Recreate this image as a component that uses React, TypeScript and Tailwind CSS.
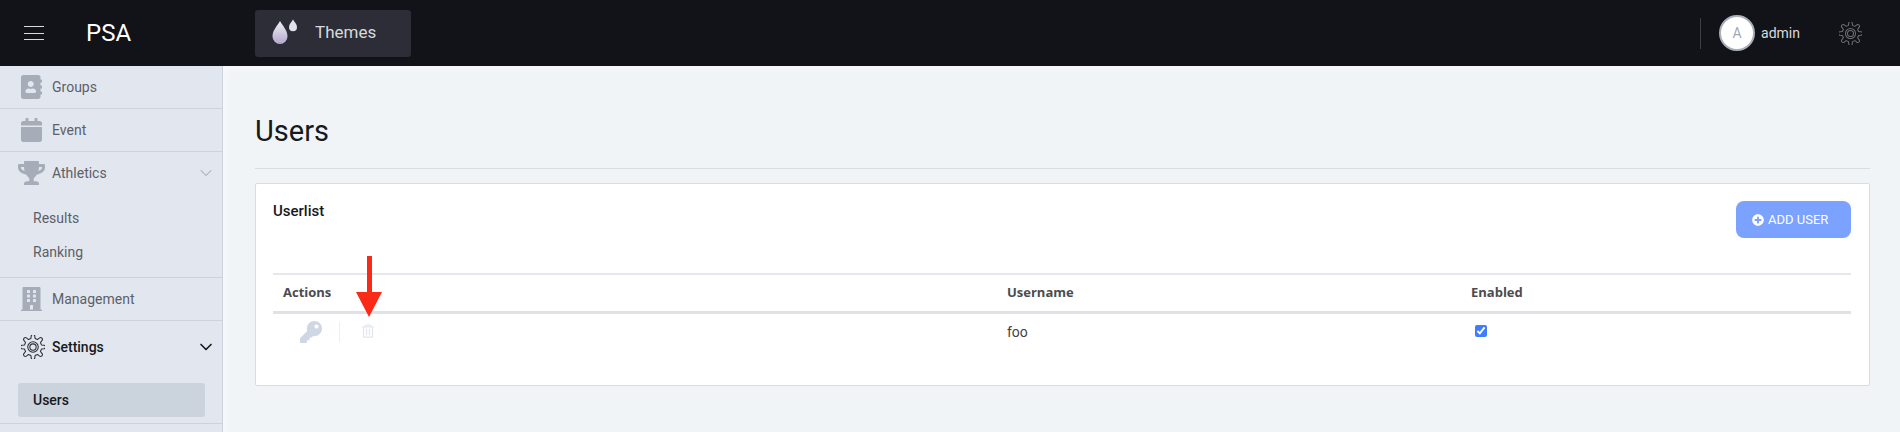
import React from "react";
import { FaAddressBook, FaCalendar, FaTrophy, FaBuilding, FaKey, FaRegTrashAlt, FaPlusCircle } from "react-icons/fa";
import { ChevronDown } from "lucide-react";

function Gear({ className }: { className?: string }) {
  const teeth = 8;
  const pts: string[] = [];
  for (let i = 0; i < teeth; i++) {
    const a = (i * 2 * Math.PI) / teeth - Math.PI / 2;
    const s = Math.PI / teeth;
    const p = (r: number, t: number) => `${(16 + r * Math.cos(t)).toFixed(2)} ${(16 + r * Math.sin(t)).toFixed(2)}`;
    pts.push(`${i === 0 ? "M" : "L"}${p(11.6, a - s * 0.62)}`);
    pts.push(`L${p(15, a - s * 0.4)}`);
    pts.push(`A2.4 2.4 0 0 1 ${p(15, a + s * 0.4)}`);
    pts.push(`L${p(11.6, a + s * 0.62)}`);
  }
  return (
    <svg viewBox="0 0 32 32" fill="none" stroke="currentColor" strokeWidth="1.4" strokeLinejoin="round" className={className}>
      <path d={pts.join(" ") + "Z"} />
      <circle cx="16" cy="16" r="7" />
      <circle cx="16" cy="16" r="4.2" />
    </svg>
  );
}

function Drops() {
  return (
    <svg viewBox="0 0 28 28" className="w-[28px] h-[28px]">
      <defs>
        <linearGradient id="dropA" x1="0" y1="0" x2="0" y2="1">
          <stop offset="0" stopColor="#f1eff6" />
          <stop offset="1" stopColor="#b3a8cc" />
        </linearGradient>
      </defs>
      <path d="M8 2C11 7.5 15.5 11 15.5 17.5A7.5 7.5 0 0 1 0.5 17.5C0.5 11 5 7.5 8 2Z" fill="url(#dropA)" />
      <path d="M21 0.5C22.6 3.2 25 5.2 25 8.2A4 4 0 0 1 17 8.2C17 5.2 19.4 3.2 21 0.5Z" fill="#e4e0ee" />
    </svg>
  );
}

function Row({ icon, label, chevron, strong }: { icon: React.ReactNode; label: string; chevron?: "dim" | "dark"; strong?: boolean }) {
  return (
    <div className={`flex items-center h-[42px] pl-[21px] pr-[6px] ${strong ? "text-[#17191d]" : "text-[#5c6068]"}`}>
      <div className="w-[31px] flex justify-start items-center">{icon}</div>
      <span className={`text-[14px] ${strong ? "font-medium" : ""}`}>{label}</span>
      {chevron && (
        <ChevronDown
          className={`ml-auto w-[20px] h-[20px] ${chevron === "dark" ? "text-[#17191d]" : "text-[#a4acb8]"}`}
          strokeWidth={chevron === "dark" ? 2 : 1.25}
        />
      )}
    </div>
  );
}

const iconCls = "text-[#a6acb8]";

export default function App() {
  return (
    <div className="h-[432px] w-[1900px] overflow-hidden flex flex-col bg-[#f1f4f7] font-['Roboto',sans-serif]">
      <header className="h-[66px] shrink-0 bg-[#111318] flex items-center relative z-10">
        <div className="w-[255px] flex items-center shrink-0">
          <div className="ml-[24px] w-[20px] flex flex-col gap-[5.5px]">
            <div className="h-px bg-[#d8dade]" />
            <div className="h-px bg-[#d8dade]" />
            <div className="h-px bg-[#d8dade]" />
          </div>
          <span className="ml-[42px] text-[24px] text-white leading-none">PSA</span>
        </div>
        <div className="w-[156px] h-[47px] rounded-[3px] bg-[#2c2d36] flex items-center pl-[17px]">
          <Drops />
          <span className="ml-[15px] text-[#d9dade] text-[17px]">Themes</span>
        </div>
        <div className="ml-auto flex items-center pr-[38px]">
          <div className="w-px h-[31px] bg-[#3c3f46] mr-[18px]" />
          <div className="w-[36px] h-[36px] rounded-full bg-white border-2 border-[#a9afb9] flex items-center justify-center text-[#a4a8b2] text-[14px]">A</div>
          <span className="ml-[6px] text-[#d9dade] text-[14px]">admin</span>
          <Gear className="ml-[39px] w-[23px] h-[23px] text-[#6c6f76]" />
        </div>
      </header>
      <div className="flex flex-1 min-h-0">
        <aside className="w-[223px] shrink-0 bg-[#e2e7ef] border-r border-[#ccd3de]">
          <div className="border-b border-[#ccd3de]">
            <Row label="Groups" icon={<FaAddressBook className={`w-[21px] h-[24px] ${iconCls}`} />} />
          </div>
          <div className="border-b border-[#ccd3de]">
            <Row label="Event" icon={<FaCalendar className={`w-[21px] h-[24px] ${iconCls}`} />} />
          </div>
          <div className="border-b border-[#ccd3de] h-[126px]">
            <Row label="Athletics" chevron="dim" icon={<FaTrophy className={`w-[27px] h-[24px] -ml-[3px] ${iconCls}`} />} />
            <div className="pl-[33px] text-[14px] text-[#5c6068] pt-[7px]">
              <div className="h-[34px] flex items-center">Results</div>
              <div className="h-[34px] flex items-center">Ranking</div>
            </div>
          </div>
          <div className="border-b border-[#ccd3de]">
            <Row label="Management" icon={<FaBuilding className={`w-[21px] h-[24px] ${iconCls}`} />} />
          </div>
          <div className="border-b border-[#ccd3de] h-[103px]">
            <div className="pt-[5px]">
              <Row strong label="Settings" chevron="dark" icon={<Gear className="w-[24px] h-[24px] text-[#2a2c31]" />} />
            </div>
            <div className="ml-[18px] mt-[15px] w-[187px] h-[34px] rounded-[3px] bg-[#cbd3dc] flex items-center pl-[15px] text-[14px] font-medium text-[#17191d]">Users</div>
          </div>
        </aside>
        <main className="flex-1 pl-[32px] pr-[30px] shadow-[inset_6px_6px_8px_-4px_rgba(255,255,255,0.5)]">
          <h1 className="text-[29px] text-[#17191d] leading-none pt-[51px] h-[103px] border-b border-[#d9dde2]">Users</h1>
          <section className="relative mt-[14px] h-[203px] bg-white border border-[#d9dde2] rounded-[2px] pl-[17px] pr-[18px] pt-[17px]">
            <div className="flex justify-between items-start h-[74px] border-b-2 border-[#e5e8ec]">
              <h2 className="text-[15px] font-medium text-[#17191d] leading-[20px]">Userlist</h2>
              <button className="w-[115px] h-[37px] rounded-[8px] bg-[#7ba2ff] text-white text-[13px] flex items-center pl-[16px]">
                <FaPlusCircle className="w-[12px] h-[12px] mr-[4px]" />
                <span>ADD USER</span>
              </button>
            </div>
            <div className="grid grid-cols-[724px_464px_1fr] text-[13px] font-['Open_Sans',sans-serif] h-[39px] items-center border-b-[3px] border-[#dfe3e8] font-bold text-[#4a4c50]">
              <span className="pl-[10px]">Actions</span>
              <span className="pl-[10px]">Username</span>
              <span className="pl-[10px]">Enabled</span>
            </div>
            <div className="grid grid-cols-[724px_464px_1fr] h-[36px] items-center text-[14px] text-[#3f4145]">
              <div className="flex items-center">
                <FaKey className="ml-[27px] w-[22px] h-[22px] text-[#cfd6e4]" />
                <div className="ml-[17px] w-px h-[20px] bg-[#eceef1]" />
                <FaRegTrashAlt className="ml-[22px] w-[12px] h-[14px] -mt-[2px] text-[#e4e7ec]" />
              </div>
              <span className="pl-[10px]">foo</span>
              <div className="pl-[14px] flex items-center -mt-[3px]">
                <input type="checkbox" defaultChecked readOnly className="w-[12px] h-[12px] accent-[#3f7dff] m-0" />
              </div>
            </div>
            <svg viewBox="0 0 26 61" className="absolute left-[100px] top-[72px] w-[26px] h-[61px]">
              <path d="M11 0H16V36H26L13 61L0 36H11Z" fill="#fa2a16" />
            </svg>
          </section>
        </main>
      </div>
    </div>
  );
}
